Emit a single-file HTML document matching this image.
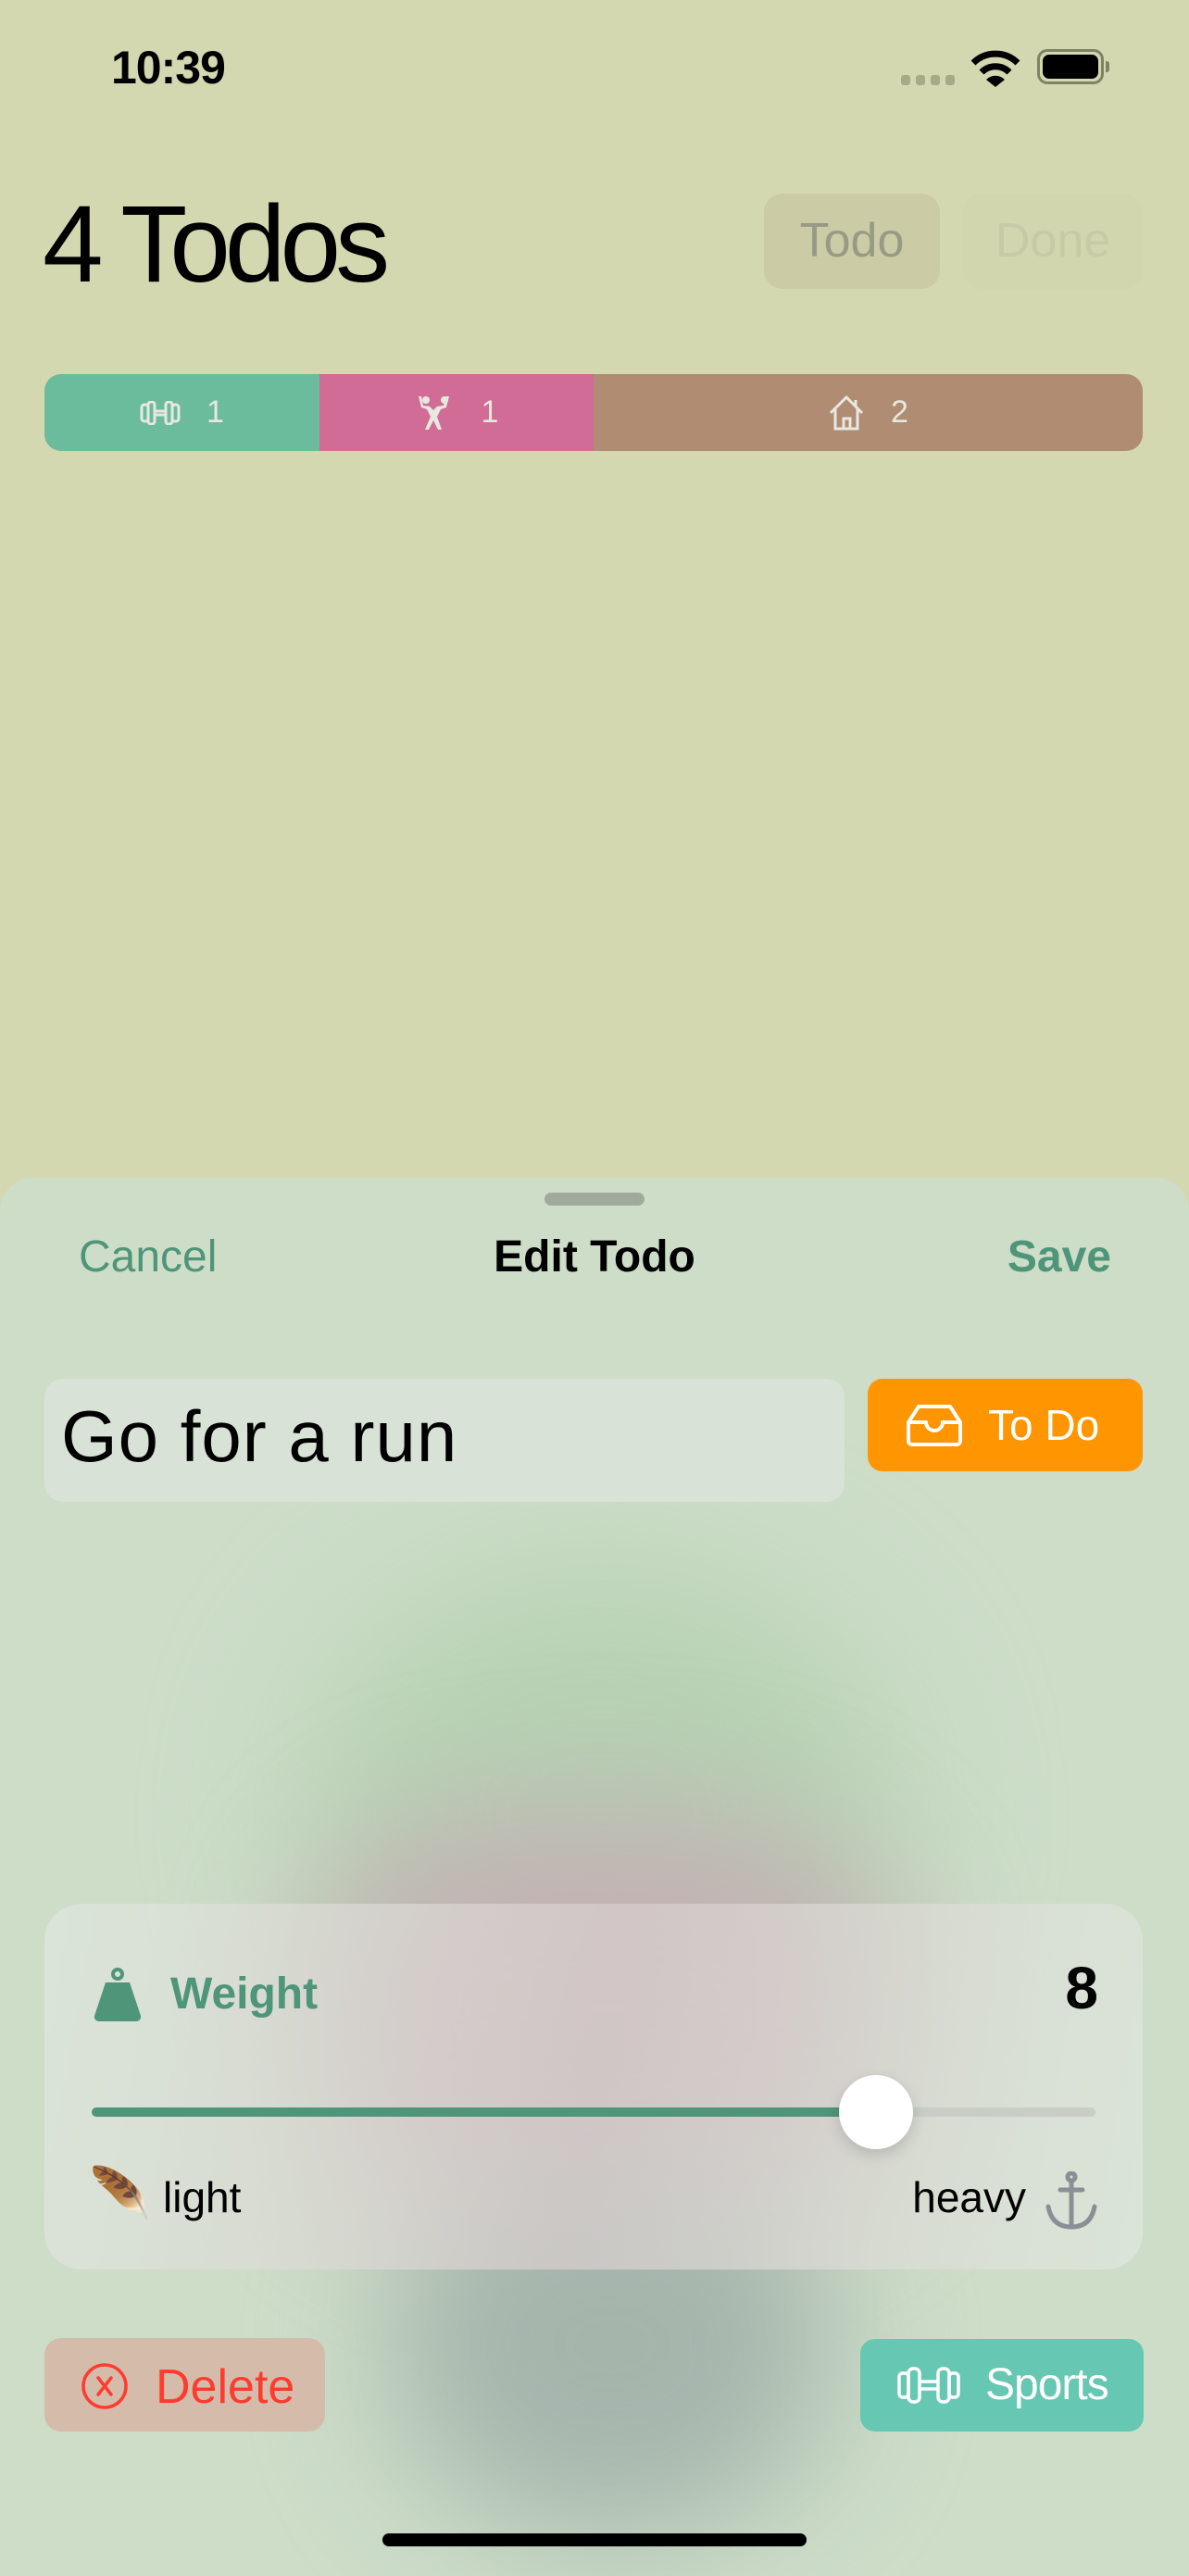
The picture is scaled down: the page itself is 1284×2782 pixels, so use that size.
<!DOCTYPE html>
<html><head><meta charset="utf-8"><style>
*{margin:0;padding:0;box-sizing:border-box}
body{width:1284px;height:2778px;background:#D4D8B0;position:relative;overflow:hidden;font-family:"Liberation Sans",sans-serif}
.a{position:absolute}
</style></head><body>
<div class="a" style="left:120px;top:44px;font-size:50px;font-weight:bold;letter-spacing:-1px;color:#000">10:39</div>
<div class="a" style="left:973px;top:81px;width:10px;height:11px;border-radius:3px;background:#A6AA86"></div>
<div class="a" style="left:989px;top:81px;width:10px;height:11px;border-radius:3px;background:#A6AA86"></div>
<div class="a" style="left:1005px;top:81px;width:10px;height:11px;border-radius:3px;background:#A6AA86"></div>
<div class="a" style="left:1021px;top:81px;width:10px;height:11px;border-radius:3px;background:#A6AA86"></div>
<svg class="a" style="left:1048px;top:54px" width="54" height="42" viewBox="0 0 54 42"><path d="M3 14 A34 34 0 0 1 51 14" stroke="#000" stroke-width="7" fill="none"/><path d="M12 24 A21 21 0 0 1 42 24" stroke="#000" stroke-width="7" fill="none"/><path d="M27 40 L17 32 A14 14 0 0 1 37 32 Z" fill="#000"/></svg>
<div class="a" style="left:1120px;top:53px;width:72px;height:38px;border:3px solid #7F8264;border-radius:11px;padding:3px"><div style="width:100%;height:100%;background:#000;border-radius:7px"></div></div>
<div class="a" style="left:1194px;top:66px;width:4px;height:12px;background:#7F8264;border-radius:0 3px 3px 0"></div>

<div class="a" style="left:46px;top:196px;font-size:118px;color:#000;letter-spacing:-6px">4 Todos</div>
<div class="a" style="left:825px;top:209px;width:190px;height:103px;border-radius:20px;background:#CBCBA6;color:#989A85;font-size:52px;text-align:center;line-height:103px">Todo</div>
<div class="a" style="left:1040px;top:209px;width:194px;height:103px;border-radius:20px;background:#D2D6AE;color:#C6CAA6;font-size:52px;text-align:center;line-height:103px">Done</div>

<div class="a" style="left:48px;top:404px;width:1186px;height:83px;border-radius:18px;overflow:hidden;display:flex;color:#E8E8E0;font-size:34px">
<div style="width:297px;background:#6BBB9D;display:flex;align-items:center;justify-content:center;gap:28px"><svg width="44" height="26" viewBox="0 0 44 26"><g fill="none" stroke="#E8E8E0" stroke-width="3"><rect x="2" y="4" width="7" height="18" rx="3"/><rect x="9" y="1" width="7" height="24" rx="3"/><rect x="28" y="1" width="7" height="24" rx="3"/><rect x="35" y="4" width="7" height="18" rx="3"/><path d="M16 11h12M16 15h12"/></g></svg><span>1</span></div>
<div style="width:296px;background:#D06C95;display:flex;align-items:center;justify-content:center;gap:28px"><svg width="44" height="40" viewBox="0 0 44 40"><g fill="#E8E8E0"><circle cx="12" cy="6" r="4"/><circle cx="32" cy="6" r="4"/><path d="M4 2l3 12 6 2 4 8-6 14h4l5-10 5 10h4l-5-14 4-8 6-2 3-12h-3l-3 10-7 1-4 4-4-4-7-1-2-10z"/></g></svg><span>1</span></div>
<div style="flex:1;background:#AF8C72;display:flex;align-items:center;justify-content:center;gap:28px"><svg width="40" height="40" viewBox="0 0 40 40"><g fill="none" stroke="#E8E8E0" stroke-width="3"><path d="M3 20L20 3l17 17M8 15v22h24V15M17 37V26h7v11M30 6v7"/></g></svg><span>2</span></div>
</div>

<div class="a" style="left:0;top:1272px;width:1284px;height:1510px;border-radius:36px 36px 0 0;background:#CDDDC8;overflow:hidden">
<div class="a" style="left:330px;top:420px;width:640px;height:540px;border-radius:50%;background:#B6D1B3;filter:blur(80px)"></div>
<div class="a" style="left:330px;top:680px;width:640px;height:460px;border-radius:40%;background:#C2B2B3;filter:blur(70px)"></div>
<div class="a" style="left:420px;top:1050px;width:480px;height:420px;border-radius:50%;background:#A5B5AC;filter:blur(70px)"></div>
</div>
<div class="a" style="left:588px;top:1288px;width:108px;height:14px;border-radius:7px;background:#A0AA9C"></div>
<div class="a" style="left:85px;top:1330px;font-size:48px;color:#4E957A">Cancel</div>
<div class="a" style="left:0;top:1330px;width:1284px;text-align:center;font-size:48px;font-weight:bold;color:#000">Edit Todo</div>
<div class="a" style="right:84px;top:1330px;font-size:48px;font-weight:bold;color:#4E957A">Save</div>

<div class="a" style="left:48px;top:1489px;width:864px;height:133px;border-radius:20px;background:#D9E2D6"></div>
<div class="a" style="left:66px;top:1506px;font-size:78px;letter-spacing:1px;color:#000">Go for a run</div>
<div class="a" style="left:937px;top:1489px;width:297px;height:100px;border-radius:16px;background:#FF9500"></div>
<svg class="a" style="left:978px;top:1516px" width="62" height="46" viewBox="0 0 62 46"><g fill="none" stroke="#fff" stroke-width="4" stroke-linejoin="round"><path d="M3 20L14 3h34l11 17v20a4 4 0 0 1-4 4H7a4 4 0 0 1-4-4z"/><path d="M3 20h19a9 9 0 0 0 18 0h19"/></g></svg>
<div class="a" style="left:1067px;top:1512px;font-size:46px;color:#fff">To Do</div>

<div class="a" style="left:48px;top:2056px;width:1186px;height:395px;border-radius:40px;background:linear-gradient(100deg,rgba(222,230,220,.8),rgba(216,206,206,.7) 50%,rgba(222,230,220,.8));"></div>
<svg class="a" style="left:100px;top:2125px" width="54" height="58" viewBox="0 0 54 58"><circle cx="27" cy="7" r="5" fill="none" stroke="#4E957A" stroke-width="4"/><path d="M14 16h26l12 36a5 5 0 0 1-5 6H7a5 5 0 0 1-5-6z" fill="#4E957A"/></svg>
<div class="a" style="left:184px;top:2126px;font-size:48px;font-weight:bold;color:#4E957A">Weight</div>
<div class="a" style="right:98px;top:2110px;font-size:64px;font-weight:bold;color:#000">8</div>
<div class="a" style="left:99px;top:2276px;width:1084px;height:10px;border-radius:5px;background:#C8CDC6"></div>
<div class="a" style="left:99px;top:2276px;width:850px;height:10px;border-radius:5px;background:#4E957A"></div>
<div class="a" style="left:906px;top:2241px;width:80px;height:80px;border-radius:50%;background:#fff;box-shadow:0 6px 16px rgba(0,0,0,.15)"></div>
<div class="a" style="left:96px;top:2338px;font-size:54px">🪶</div>
<div class="a" style="left:176px;top:2346px;font-size:46px;color:#000">light</div>
<div class="a" style="right:176px;top:2346px;font-size:46px;color:#000">heavy</div>
<svg class="a" style="left:1128px;top:2345px" width="58" height="64" viewBox="0 0 58 64"><g fill="none" stroke="#8A8F95" stroke-width="5" stroke-linecap="round"><circle cx="29" cy="6" r="4"/><path d="M29 10v50M17 20h24M4 38q4 22 25 22q21 0 25-22"/></g></svg>

<div class="a" style="left:48px;top:2525px;width:303px;height:101px;border-radius:18px;background:#D5BCAA"></div>
<svg class="a" style="left:87px;top:2551px" width="52" height="52" viewBox="0 0 52 52"><circle cx="26" cy="26" r="23" fill="none" stroke="#FF3B30" stroke-width="3.5"/><path d="M19 17l14 18M33 17L19 35" stroke="#FF3B30" stroke-width="3.5" stroke-linecap="round"/></svg>
<div class="a" style="left:168px;top:2548px;font-size:52px;color:#FF3B30">Delete</div>

<div class="a" style="left:929px;top:2526px;width:306px;height:100px;border-radius:16px;background:#66C7B2"></div>
<svg class="a" style="left:969px;top:2556px" width="68" height="40" viewBox="0 0 68 40"><g fill="none" stroke="#fff" stroke-width="3.5"><rect x="2" y="7" width="10" height="26" rx="4"/><rect x="12" y="2" width="12" height="36" rx="5"/><rect x="44" y="2" width="12" height="36" rx="5"/><rect x="56" y="7" width="10" height="26" rx="4"/><path d="M24 16h20M24 24h20"/></g></svg>
<div class="a" style="left:1064px;top:2548px;font-size:48px;letter-spacing:-1px;color:#fff">Sports</div>

<div class="a" style="left:413px;top:2736px;width:458px;height:14px;border-radius:7px;background:#000"></div>
</body></html>
